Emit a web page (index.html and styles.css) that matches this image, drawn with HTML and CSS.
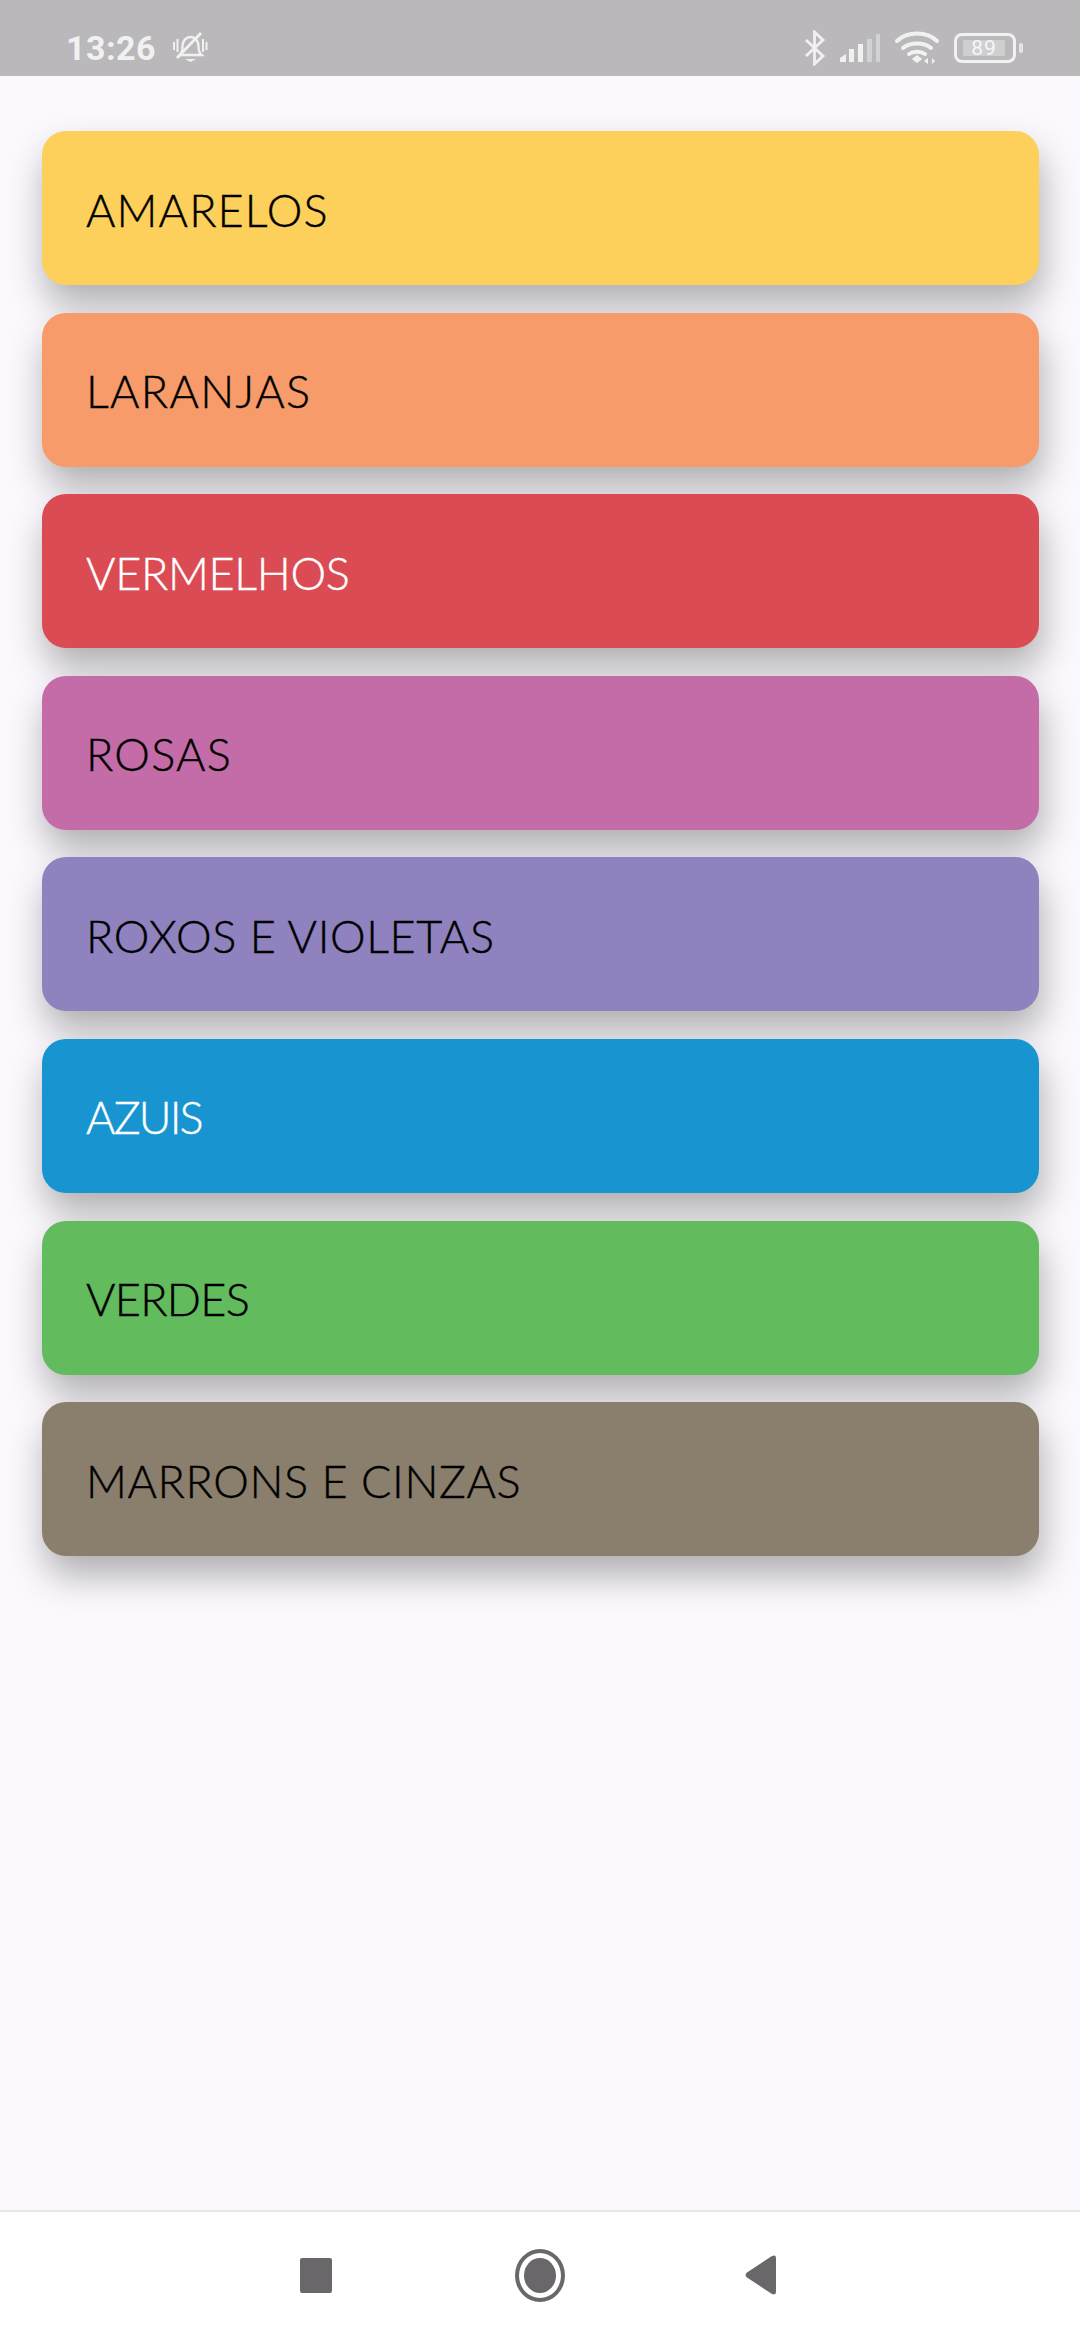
FILE: index.html
```html
<!DOCTYPE html>
<html lang="pt">
<head>
  <meta charset="UTF-8" />
  <meta name="viewport" content="width=device-width, initial-scale=1.0"/>
  <title>Cores</title>
  <link rel="stylesheet" href="styles.css">
</head>
<body>

  <!-- STATUS BAR -->
  <header class="status-bar">
    <div class="status-left">
      <span class="time">13:26</span>
      <svg class="icon-bell" width="36" height="34" viewBox="0 0 36 34" fill="none" stroke="#f2f1f2" stroke-width="2.4">
        <path d="M8 24c2-2 2.500-5 2.500-9 0-5 3.500-9 8-9s8 4 8 9c0 4 .5 7 3 9z"/>
        <path d="M13 28h11l-5.500 3z" fill="#f2f1f2" stroke="none"/>
        <path d="M2 11v8M5.500 8v13M31 8v13M34.500 11v8" stroke-width="2"/>
        <path d="M5 27L29 2" stroke-width="2.800"/>
      </svg>
    </div>
    <div class="status-right">
      <svg class="icon-bt" width="22" height="36" viewBox="0 0 22 36" fill="none" stroke="#f2f1f2" stroke-width="2.800">
        <path d="M2 10l17 16-8.500 8V2L19 10 2 26"/>
      </svg>
      <svg width="42" height="30" viewBox="0 0 42 30">
        <path d="M1 29v-4l6-4v8z" fill="#f2f1f2"/>
        <rect x="10" y="16" width="5" height="13" fill="#f2f1f2"/>
        <rect x="19" y="11" width="5" height="18" fill="#f2f1f2"/>
        <rect x="28" y="6" width="5" height="23" fill="#d2d1d3"/>
        <rect x="37" y="1" width="4" height="28" fill="#d2d1d3"/>
      </svg>
      <svg width="44" height="34" viewBox="0 0 44 34" fill="none" stroke="#f2f1f2" stroke-width="4" stroke-linecap="round">
        <path d="M2 10c10-10 30-10 40 0"/>
        <path d="M8 17c7-6 21-6 28 0"/>
        <path d="M14 23c4-3 12-3 16 0"/>
        <path d="M18 28l4-3 4 3-4 3z" fill="#f2f1f2" stroke-width="1.500"/>
        <path d="M33 27l-4 3 4 3zM37 22v11l3-3-3-3" fill="#f2f1f2" stroke="none"/>
      </svg>
      <div class="battery">
        <div class="battery-body"><span class="battery-level">89</span></div>
        <div class="battery-tip"></div>
      </div>
    </div>
  </header>

  <!-- LISTA DE CORES -->
  <main class="color-list">
    <div class="color-card yellow">AMARELOS</div>
    <div class="color-card orange">LARANJAS</div>
    <div class="color-card red">VERMELHOS</div>
    <div class="color-card pink">ROSAS</div>
    <div class="color-card purple">ROXOS E VIOLETAS</div>
    <div class="color-card blue">AZUIS</div>
    <div class="color-card green">VERDES</div>
    <div class="color-card brown">MARRONS E CINZAS</div>
  </main>

  <!-- NAVEGAÇÃO -->
  <nav class="nav-bar">
    <div class="nav-square"></div>
    <div class="nav-home"><div class="nav-home-dot"></div></div>
    <svg width="31" height="40" viewBox="0 0 31 40">
      <path d="M27 1L2 17.500q-3 2.500 0 5L27 39q4 1.500 4-2V3q0-3.500-4-2z" fill="#69676a"/>
    </svg>
  </nav>

</body>
</html>
```

FILE: styles.css
```css
* {
  box-sizing: border-box;
}

html, body {
  height: 100%;
}

body {
  margin: 0;
  display: flex;
  flex-direction: column;
  background: #fbf9fd;
  font-family: 'Lato', sans-serif;
}

.status-bar {
  height: 76px;
  flex: none;
  display: flex;
  align-items: center;
  justify-content: space-between;
  padding: 20px 57px 0 66px;
  background: #bab8bb;
  color: #f2f1f2;
}

.status-left {
  display: flex;
  align-items: center;
  gap: 16px;
}

.time {
  font-family: 'Roboto', sans-serif;
  font-size: 34px;
  font-weight: 700;
  letter-spacing: 0.5px;
}

.status-right {
  display: flex;
  align-items: center;
  gap: 14px;
}

.icon-bt {
  margin-right: -1px;
}

.battery {
  display: flex;
  align-items: center;
  gap: 3px;
  margin-left: 1px;
}

.battery-body {
  width: 62px;
  height: 30px;
  padding: 4px 6px;
  border: 3px solid #f2f1f2;
  border-radius: 8px;
}

.battery-level {
  display: block;
  height: 16px;
  width: 42px;
  background: #cfced0;
  font-family: 'Roboto', sans-serif;
  font-size: 21px;
  line-height: 16px;
  letter-spacing: 1px;
  text-align: center;
  color: #f7f6f7;
}

.battery-tip {
  width: 4px;
  height: 10px;
  border-radius: 2px;
  background: #e6e5e6;
}

.color-list {
  flex: 1;
  display: flex;
  flex-direction: column;
  gap: 27.6px;
  padding: 55px 41px 0 42px;
}

.color-card {
  height: 154px;
  padding: 3px 0 0 44px;
  display: flex;
  align-items: center;
  border-radius: 24px;
  box-shadow: 3px 20px 36px rgba(0,0,0,0.3);
  font-size: 45px;
  font-weight: 300;
  -webkit-text-stroke: 0.4px currentColor;
  color: #000;
  position: relative;
}

/* letter-spacing per card, to get the width of each label right */
.yellow { background: #fcd05a; letter-spacing: 1.1px; }
.orange { background: #f69b69; letter-spacing: 1.3px; }
.red { background: #da4b53; color: #fff; letter-spacing: -0.3px; }
.pink { background: #c46ca8; letter-spacing: 1.2px; }
.purple { background: #8f82bf; letter-spacing: 0.6px; }
.blue { background: #1895d0; color: #fff; letter-spacing: -1.8px; }
.green { background: #62bb5d; letter-spacing: -0.7px; }
.brown { background: #8a7e6c; letter-spacing: 0.6px; }

.nav-bar {
  height: 130px;
  flex: none;
  display: flex;
  align-items: center;
  padding: 0 0 2px 300px;
  background: #fff;
  border-top: 2px solid #e8e6ea;
}

.nav-square {
  width: 32px;
  height: 35px;
  margin-right: 183px;
  border-radius: 2px;
  background: #69676a;
}

.nav-home {
  width: 50px;
  height: 53px;
  margin-right: 180px;
  padding: 5px;
  border: 4px solid #69676a;
  border-radius: 50%;
}

.nav-home-dot {
  width: 100%;
  height: 100%;
  border-radius: 50%;
  background: #69676a;
}
```
